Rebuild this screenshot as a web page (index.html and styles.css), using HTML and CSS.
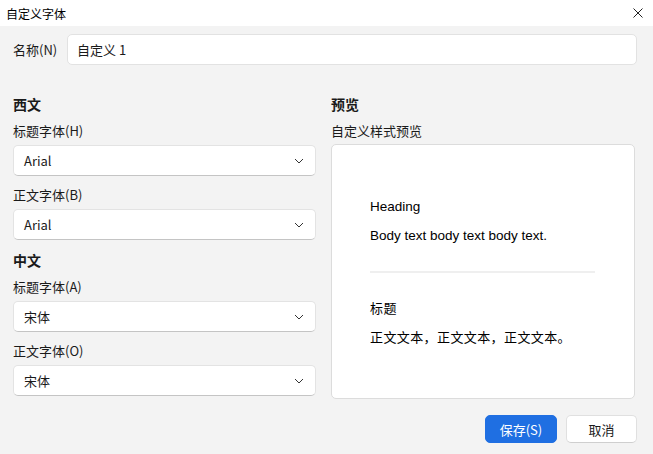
FILE: index.html
```
<!DOCTYPE html>
<html lang="zh-CN">
<head>
    <meta charset="UTF-8">
    <meta name="viewport" content="width=device-width, initial-scale=1.0">
    <title>自定义字体</title>
    <link rel="stylesheet" href="styles.css">
</head>
<body>
    <div class="titlebar">
        <span class="title">自定义字体</span>
        <button class="close" aria-label="关闭">
            <svg width="10" height="10" viewBox="0 0 10 10"><path d="M0.5 0.5 L9.5 9.5 M9.5 0.5 L0.5 9.5" stroke="#222" stroke-width="1" fill="none"/></svg>
        </button>
    </div>
    <div class="content">
        <div class="name-row">
            <label for="nameInput">名称(N)</label>
            <input type="text" id="nameInput" class="text-input" value="自定义 1">
        </div>
        <div class="columns">
            <div class="col">
                <div class="group-title">西文</div>
                <div class="field-label">标题字体(H)</div>
                <div class="select"><span>Arial</span><svg width="10" height="6" viewBox="0 0 10 6"><path d="M1 1 L5 5 L9 1" stroke="#333" stroke-width="1" fill="none"/></svg></div>
                <div class="field-label">正文字体(B)</div>
                <div class="select"><span>Arial</span><svg width="10" height="6" viewBox="0 0 10 6"><path d="M1 1 L5 5 L9 1" stroke="#333" stroke-width="1" fill="none"/></svg></div>
                <div class="group-title">中文</div>
                <div class="field-label">标题字体(A)</div>
                <div class="select"><span>宋体</span><svg width="10" height="6" viewBox="0 0 10 6"><path d="M1 1 L5 5 L9 1" stroke="#333" stroke-width="1" fill="none"/></svg></div>
                <div class="field-label">正文字体(O)</div>
                <div class="select"><span>宋体</span><svg width="10" height="6" viewBox="0 0 10 6"><path d="M1 1 L5 5 L9 1" stroke="#333" stroke-width="1" fill="none"/></svg></div>
            </div>
            <div class="col">
                <div class="group-title">预览</div>
                <div class="field-label">自定义样式预览</div>
                <div class="preview">
                    <div class="pv-heading">Heading</div>
                    <div class="pv-body">Body text body text body text.</div>
                    <div class="pv-divider"></div>
                    <div class="pv-heading cn">标题</div>
                    <div class="pv-body cn">正文文本，正文文本，正文文本。</div>
                </div>
            </div>
        </div>
        <div class="actions">
            <button class="btn primary">保存(S)</button>
            <button class="btn">取消</button>
        </div>
    </div>
</body>
</html>
```

FILE: styles.css
```
body {
    margin: 0;
    background-color: #f3f3f3;
    color: #1a1a1a;
    font-family: "Noto Sans CJK SC", "Noto Sans", sans-serif;
    font-size: 13px;
}
.titlebar {
    height: 26px;
    background: #fff;
    display: flex;
    align-items: center;
    justify-content: space-between;
    padding: 0 10px 0 6px;
}
.title {
    font-size: 12px;
    color: #000;
}
.close {
    border: none;
    background: none;
    padding: 0;
    width: 10px;
    height: 10px;
    display: flex;
}
.content {
    padding: 8px 16px 0 13px;
}
.name-row {
    display: flex;
    align-items: center;
    gap: 9px;
}
.name-row label {
    width: 45px;
}
.text-input {
    flex: 1;
    height: 31px;
    box-sizing: border-box;
    border: 1px solid #e2e2e2;
    border-radius: 5px;
    background: #fff;
    padding: 0 9px;
    font-family: inherit;
    font-size: 13px;
    color: #1a1a1a;
    outline: none;
}
.columns {
    display: grid;
    grid-template-columns: 303px 304px;
    column-gap: 15px;
    margin-top: 29px;
}
.group-title {
    font-size: 14px;
    font-weight: bold;
    line-height: 20px;
    margin-top: 10px;
}
.col > .group-title:first-child {
    margin-top: 0;
}
.field-label {
    line-height: 18px;
    margin-top: 10px;
}
.group-title + .field-label {
    margin-top: 8px;
}
.select {
    margin-top: 5px;
    height: 31px;
    box-sizing: border-box;
    background: #fff;
    border: 1px solid #e3e3e3;
    border-bottom-color: #c4c4c4;
    border-radius: 5px;
    display: flex;
    align-items: center;
    justify-content: space-between;
    padding: 0 11px 0 10px;
}
.preview {
    margin-top: 4px;
    height: 255px;
    box-sizing: border-box;
    background: #fff;
    border: 1px solid #dcdcdc;
    border-radius: 5px;
    padding: 52px 38px 0 38px;
    font-family: "Liberation Sans", Arial, sans-serif;
    font-size: 13.5px;
    color: #000;
}
.pv-heading {
    line-height: 20px;
}
.pv-body {
    line-height: 20px;
    margin-top: 9px;
}
.pv-divider {
    width: 225px;
    height: 2px;
    background: #efefef;
    margin-top: 25px;
}
.pv-divider + .pv-heading {
    margin-top: 25px;
}
.cn {
    font-family: "Noto Sans CJK SC", sans-serif;
    font-size: 13px;
    letter-spacing: 0.4px;
}
.actions {
    display: flex;
    justify-content: flex-end;
    gap: 9px;
    margin-top: 16px;
}
.btn {
    width: 71px;
    height: 28px;
    border: 1px solid #e0e0e0;
    border-bottom-color: #cfcfcf;
    border-radius: 5px;
    background: #fff;
    font-family: inherit;
    font-size: 13px;
    color: #1a1a1a;
    padding: 0;
}
.btn.primary {
    width: 72px;
    background: #1f6fe2;
    border-color: #1f6fe2;
    color: #fff;
}
```
